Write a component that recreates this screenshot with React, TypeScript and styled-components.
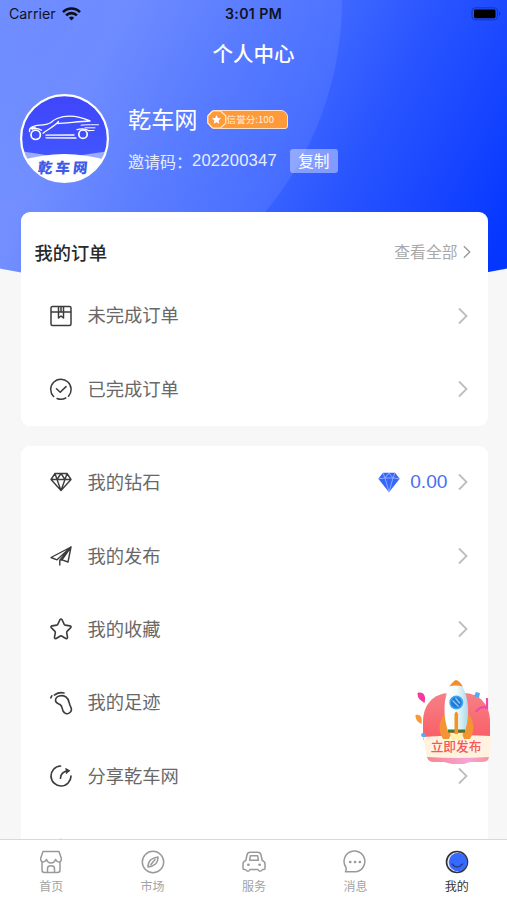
import React from "react";
import styled, { createGlobalStyle, css } from "styled-components";

const GlobalStyle = createGlobalStyle`
  * { box-sizing: border-box; }
  body { margin: 0; background: #f7f7f7; overflow: hidden; }
`;

const cjk = `"Noto Sans CJK SC", sans-serif`;

const Screen = styled.div`
  position: relative;
  display: flex;
  flex-direction: column;
  width: 507px;
  height: 900px;
  overflow: hidden;
  background: #f7f7f7;
  font-family: ${cjk};
`;

const Content = styled.main`
  flex: 1;
  min-height: 0;
  overflow: hidden;
`;

const Header = styled.header`
  height: 294px;
  background:
    radial-gradient(circle at 11px 0, rgba(255, 255, 255, 0.01) 60px, rgba(255, 255, 255, 0.08) 330.5px, transparent 331.5px),
    linear-gradient(118deg, #6f8dff 0%, #6b89ff 20%, #5075ff 38%, #3d66ff 53%, #2753ff 68%, #1745ff 82%, #0436ff 95%);
  clip-path: circle(1267px at 50% -973px);
`;

const StatusBar = styled.div`
  display: grid;
  grid-template-columns: 1fr auto 1fr;
  align-items: center;
  height: 28px;
  padding: 0 5px 0 9px;
  color: #10131f;
  font: 500 14.3px/28px Inter, sans-serif;
`;

const Carrier = styled.div`
  display: flex;
  align-items: center;
  gap: 6px;
  font-weight: 400;
  font-size: 14.2px;
`;

const Clock = styled.div`
  margin-left: -4px;
  font-weight: 600;
  font-size: 14.2px;
  letter-spacing: 0.35px;
`;

const BatteryBox = styled.div`
  display: flex;
  justify-content: flex-end;
`;

const Title = styled.h1`
  margin: 0;
  height: 50px;
  color: #fff;
  text-align: center;
  font-weight: 500;
  font-size: 20.5px;
  line-height: 50px;
`;

const Profile = styled.section`
  display: flex;
  align-items: center;
  gap: 19px;
  height: 90px;
  margin-top: 15px;
  padding-left: 20px;
  color: #fff;
`;

const Avatar = styled.div`
  width: 89px;
  height: 89px;
  flex: none;
  svg { display: block; }
`;

const Identity = styled.div`
  display: flex;
  flex-direction: column;
  gap: 14px;
`;

const NameLine = styled.div`
  display: flex;
  align-items: center;
  gap: 9px;
  height: 32px;
  font-size: 23.2px;
  line-height: 30px;
`;

const Name = styled.span`
  height: 32px;
`;

const Credit = styled.div`
  display: flex;
  align-items: center;
  width: 81px;
  height: 19px;
  border: 1px solid #ffe2c4;
  border-radius: 9px 7px 3px 9px;
  background: #ff9a3a;
  font-size: 9.6px;
  line-height: 17px;
  white-space: nowrap;
  color: #fff0dc;
  svg { flex: none; margin-left: -1px; }
`;

const InviteLine = styled.div`
  display: flex;
  align-items: center;
  height: 24px;
  font-size: 16px;
  color: #e6ecff;
`;

const Code = styled.span`
  font-family: "Liberation Sans", sans-serif;
  font-size: 16.6px;
  letter-spacing: 0.2px;
`;

const CopyButton = styled.button`
  width: 48px;
  height: 24px;
  margin-left: 13px;
  padding: 0;
  border: 0;
  border-radius: 3px;
  background: rgba(255, 255, 255, 0.4);
  color: #fff;
  font: 15.7px/22px ${cjk};
`;

const Cards = styled.div`
  position: relative;
  display: flex;
  flex-direction: column;
  gap: 20px;
  margin: -82px 19.5px 0 20.5px;
`;

const Card = styled.section`
  border-radius: 9px;
  background: #fff;
`;

const CardHead = styled.div`
  display: flex;
  align-items: center;
  justify-content: space-between;
  height: 67px;
  padding: 12px 17px 0 14px;
`;

const CardTitle = styled.h2`
  margin: 0;
  color: #292929;
  font-weight: 500;
  font-size: 18.2px;
`;

const MoreLink = styled.a`
  display: flex;
  align-items: center;
  gap: 5px;
  color: #a9a9a9;
  font-size: 15.8px;
`;

const Row = styled.div`
  display: flex;
  align-items: center;
  height: 73.4px;
  padding: 0 20px 0 28px;
  svg { flex: none; }
`;

const RowLabel = styled.span`
  flex: 1;
  margin-left: 15px;
  padding-bottom: 2.6px;
  color: #686868;
  font-size: 18.3px;
`;

const Balance = styled.span`
  display: flex;
  align-items: center;
  gap: 10px;
  margin-right: 10px;
  color: #4a70f0;
  font: 19.2px "Liberation Sans", sans-serif;
`;

const TabBar = styled.nav`
  display: grid;
  grid-template-columns: repeat(5, 1fr);
  height: 61px;
  border-top: 1px solid #d8d8d8;
  background: #fff;
`;

const Tab = styled.div<{ $active?: boolean }>`
  display: flex;
  flex-direction: column;
  align-items: center;
  padding-top: 10px;
  padding-left: 1px;
  gap: 3px;
  color: #a3a3a3;
  font-size: 12px;
  line-height: 18px;
  ${(p) => p.$active && css`color: #333;`}
  svg { display: block; }
`;

const Publish = styled.div`
  position: absolute;
  left: 414px;
  top: 678px;
  width: 80px;
  height: 90px;
`;

const PublishText = styled.span`
  position: absolute;
  left: 0;
  top: 59px;
  width: 84px;
  color: #f4565b;
  text-align: center;
  font-weight: 500;
  font-size: 12.7px;
  line-height: 18px;
`;

const BrandText = styled.text`
  font: 900 14.5px ${cjk};
  letter-spacing: 3px;
  fill: #405be8;
`;

const Line: React.FC<{ children: React.ReactNode; size?: number; width?: number; color?: string }> = ({
  children, size = 24, width = 1.5, color = "#3c3c3c",
}) => (
  <svg width={size} height={size} viewBox="0 0 24 24" fill="none" stroke={color} strokeWidth={width} strokeLinecap="round" strokeLinejoin="round">
    {children}
  </svg>
);

const Chevron = ({ small = false }: { small?: boolean }) => (
  <svg width={small ? 8 : 10} height={small ? 14 : 18} viewBox="0 0 10 18" fill="none" stroke={small ? "#999" : "#bdbdbd"} strokeWidth="1.8">
    <path d="M1 1.5 8.5 9 1 16.5" />
  </svg>
);

const Wifi = () => (
  <svg width="19" height="14" viewBox="0 0 19 14" fill="none" stroke="#0b0e19" strokeWidth="2.6">
    <path d="M1 5.1a12 12 0 0 1 17 0M4.1 8.4a7.6 7.6 0 0 1 10.8 0" />
    <path d="m6.8 10.8 2.7 2.8 2.7-2.8a4 4 0 0 0-5.4 0Z" fill="#0b0e19" stroke="none" />
  </svg>
);

const Battery = () => (
  <svg width="31" height="14" viewBox="0 0 31 14">
    <rect x="1" y=".8" width="25.5" height="12" rx="3.2" fill="none" stroke="#1a35aa" />
    <rect x="3" y="2.6" width="21.5" height="8.6" rx="1.4" fill="#000" />
    <path d="M28 4.8v4c1.8-.7 1.8-3.3 0-4Z" fill="#1a35aa" />
  </svg>
);

const BrandLogo = () => (
  <svg width="89" height="89" viewBox="0 0 89 89">
    <defs>
      <clipPath id="disc"><circle cx="44.5" cy="44.5" r="43" /></clipPath>
      <linearGradient id="night" x1="0" y1="0" x2="0" y2="1">
        <stop offset="0" stopColor="#3f45fb" /><stop offset="1" stopColor="#425dff" />
      </linearGradient>
    </defs>
    <circle cx="44.5" cy="44.5" r="43.5" fill="url(#night)" />
    <g clipPath="url(#disc)">
      <path d="M0 57q22 3 44 7 22-4 45-7v32H0Z" fill="#9babff" />
      <path d="M0 67q44-14 89 0v22H0Z" fill="#fff" />
    </g>
    <circle cx="44.5" cy="44.5" r="43.4" fill="none" stroke="#fff" strokeWidth="2.2" />
    <g fill="none" stroke="#fff" strokeWidth="1.3" strokeLinecap="round">
      <circle cx="15.7" cy="40.8" r="4.7" strokeWidth="1.7" />
      <circle cx="63" cy="40.2" r="4.2" strokeWidth="1.7" />
      <path d="M9.500 37.500C9 33.500 12.500 32 20 31.200q7-.4 11-2.700 2-2.200 6-4c11-4.500 22-2.500 33 2.300M37 29.500C46 29.500 58 27.300 70 27M10 34.500l5-.8M23 39.200C28 35 34 33 38.500 27.500M21.500 36.200q-5-3-9.500-1M26 41.200l28-.2M26 43.800l30 .2M57 35.600c5-1.500 9-.8 12 1.200" />
      <path d="M61 31.200c6-.7 13-.4 17.500-.4M65 33.800h10M69 36.500h5" strokeWidth="1" />
    </g>
    <BrandText transform="translate(17.500 78.500) skewX(-6)">乾车网</BrandText>
  </svg>
);

const Medal = () => (
  <svg width="20" height="19" viewBox="0 0 20 19">
    <path d="M5.8.8h7.4l5.5 5v7.4l-5.5 5H5.8L.8 13V6Z" fill="#ff9a3a" stroke="#ffe5cc" strokeWidth="1.3" />
    <path d="m9.500 5 1.400 2.900 3.100.4-2.300 2.200.6 3.200-2.800-1.500-2.800 1.500.6-3.200L5 8.300l3.100-.4Z" fill="#fff" />
  </svg>
);

const BlueGem = () => (
  <svg width="22" height="21" viewBox="0 0 22 21">
    <path d="M5 .8h12l4.700 6L11 20.200.3 6.800Z" fill="#3766ff" />
    <path d="M.5 6.800 7 6l4-5 4 5 6.500.8M7 6l4 13.800L15 6M7 6h8M5 1l2 5M17 1l-2 5" fill="none" stroke="#a2bbff" strokeWidth=".8" />
  </svg>
);

const Rocket = () => (
  <svg width="80" height="90" viewBox="0 0 80 90">
    <defs>
      <linearGradient id="rose" x1="0" y1="0" x2="0" y2="1"><stop stopColor="#f68187" /><stop offset="1" stopColor="#fa5d65" /></linearGradient>
      <linearGradient id="base"><stop stopColor="#f9848e" /><stop offset=".65" stopColor="#f6a4d7" /><stop offset="1" stopColor="#f794a2" /></linearGradient>
      <linearGradient id="hull"><stop stopColor="#fff" /><stop offset=".5" stopColor="#f2fbfe" /><stop offset="1" stopColor="#acd9eb" /></linearGradient>
    </defs>
    <path d="M9 62V44c0-17 10-29 27-29h13c17 0 27 12 27 29v18Z" fill="url(#rose)" />
    <path d="M13 79h62l-1 3q-2 2-7 2H56l-6 2H38l-8-2H20q-6 0-7-5Z" fill="url(#base)" />
    <path d="M9 59q34-3 68-1l-2 21q-31 2-62 0Z" fill="#fff3df" />
    <path d="M3.500 15c6-2 9 3 7 10-4-3-7-4-7-10Z" fill="#f43b9c" />
    <path d="M1.500 37c5-1 7 2 6 9-4-2-6-4-6-9Z" fill="#f99a38" />
    <path d="M7 57c1-3 4-3 5 0-1 3-4 3-5 0ZM62 14l4 1-1 5-5-2Z" fill="#53abf3" />
    <path d="M73 20v10c-4-2-9 0-11 4" fill="none" stroke="#ee4ba4" strokeWidth="2.200" />
    <path d="M33 34c-8 7-10 17-4 27h6l2-5ZM52 34c8 7 10 17 4 27h-6l-2-5Z" fill="#f59432" />
    <path d="M36 55h13l-2 9-4.500-3-4.500 3Z" fill="#fff0ac" />
    <path d="M36 7.500C29 20 29 38 34 53h17c5-15 4-33-3-45.500Z" fill="url(#hull)" />
    <path d="M35.500 8.500Q39 3 42 2q4 1 6.700 6.500-7-2-13.200 0Z" fill="#f58b29" />
    <path d="M34 51.500h17v3H34Z" fill="#397e38" />
    <path d="M40.500 36q1.800-5 3.600 0v20h-3.600Z" fill="#f39425" />
    <circle cx="42.300" cy="24.500" r="7" fill="#3aa9f3" />
    <circle cx="42.300" cy="24.500" r="5.400" fill="#2577d4" />
    <path d="m38.500 22.500 6 6m-3-8.500 4.500 5.500" stroke="#8acbf6" strokeWidth="1.300" />
  </svg>
);

const BoxIcon = () => <Line><path d="M2 4q0-1.500 1.500-1.500h17Q22 2.500 22 4v16q0 1.500-1.500 1.500h-17Q2 21.500 2 20ZM2 8h20M9.500 2.500V14l2.500-2 2.500 2V2.500M12 2.500V8" /></Line>;
const DoneIcon = () => <Line><path d="M4.600 19.500A10.200 10.200 0 1 1 19.500 19.200M16.800 21A10.200 10.200 0 0 1 8 21.500M7.500 11.800l3.700 3.400 5.800-5.600" /></Line>;
const GemIcon = () => <Line width={1.400}><path d="M6 3.500h12l4 6-10 11-10-11ZM2 9.500h20M6 3.500l2 6 4-6 4 6 2-6M8 9.500l4 11 4-11" /></Line>;
const SendIcon = () => <Line width={1.400}><path d="M22 3 2 13.500l6 2.300L22 3l-3 15-6-2.200M22 3 10.800 16.200V21M10.800 16.200 13 15.800 22 3" /></Line>;
const StarIcon = () => <Line width={1.600}><path d="M10.800 3q1.200-2 2.400 0l2 4.400q.3.600 1 .7l4.700.8q2 .5.600 2L18 14.400q-.4.500-.3 1.200l.8 4.500q.2 2-1.700 1.400L12.600 19q-.6-.3-1.200 0L7.200 21.500q-1.900.6-1.700-1.400l.8-4.500q.1-.7-.3-1.200l-3.500-3.500q-1.400-1.500.6-2l4.700-.8q.7-.1 1-.7Z" /></Line>;
const FootIcon = () => <Line width={1.600}><path d="M6.500 9.500C6.500 4.500 13 3.500 17 6c3.600 2.400 2.500 6 4.600 9.700 3 6-4.600 9.800-7.600 4.300-.9-2.200-.5-5-3-6.500C8.500 12.500 6.500 12 6.500 9.500ZM1.800 6.800l1-2M5.500 4Q10 .8 15 2" /></Line>;
const ShareIcon = () => <Line width={1.700}><path d="M11.500 2A10 10 0 1 0 22 12M11.500 14.200c0-4.200 2.800-7.200 8-7.200" /><path d="m16.300 3.800 5 2.800-4.300 3.600Z" fill="#3c3c3c" stroke="none" /></Line>;
const GearIcon = () => <Line width={1.600}><path d="m12 2.500 8 4.500v10l-8 5-8-5V7Z" /><circle cx="12" cy="12" r="3" /></Line>;

const gray = "#999";
const HomeIcon = () => <Line color={gray}><path d="M4 1.500h16l2.300 6.700v2q-1.600 3-4 1.300-1.500-1.500-1.800-2-1.200 3.500-4.500 3.500T7.500 9.500q-.3.500-1.800 2-2.400 1.700-4-1.300v-2ZM3 12.500V20q0 2.500 2.500 2.500h13Q21 22.500 21 20v-7.500M8.500 22v-3.500q0-2.700 3.500-2.700t3.500 2.700V22" /></Line>;
const CompassIcon = () => <Line color={gray}><circle cx="12" cy="12" r="10.700" /><path d="M17 7q-5 .7-7.500 3Q7 12.500 7 17q5-.7 7.500-3Q17 11.500 17 7ZM14 9.500l-4 5" /></Line>;
const CarIcon = () => <Line color={gray}><path d="M3.800 10.500 5 5q.6-2.700 3.200-2.700h7.600Q18.400 2.300 19 5l1.200 5.500q2.800 1 2.800 3.500v4.500q0 1-1 1h-1.500q-.8 1.700-2.500 1.700-1.200 0-2-1.700H8q-.8 1.700-2 1.700-1.700 0-2.500-1.700H2q-1 0-1-1V14q0-2.500 2.800-3.500ZM7.600 10.200l.8-4.500h7.200l.8 4.500Z" /><path d="M6.300 14.800h.2M17.500 14.800h.2" strokeWidth="2.600" /></Line>;
const ChatIcon = () => <Line color={gray}><path d="M2.500 21.800h9.700A10.400 10.400 0 1 0 3 17.500q.5 2-.5 4.300Z" /><path d="M7.200 12h.1M12 12h.1M16.800 12h.1" strokeWidth="2.600" /></Line>;
const MeIcon = () => (
  <svg width="24" height="24" viewBox="0 0 24 24">
    <circle cx="12" cy="12" r="10.500" fill="#e6eaff" stroke="#333" strokeWidth="1.600" />
    <circle cx="13" cy="12" r="9.200" fill="#3769ff" />
    <path d="M7 14q5 6 10.500 0" fill="none" stroke="#263d88" strokeWidth="1.500" strokeLinecap="round" />
  </svg>
);

const orders = [
  { label: "未完成订单", icon: <BoxIcon /> },
  { label: "已完成订单", icon: <DoneIcon /> },
];

const menu = [
  { label: "我的钻石", icon: <GemIcon />, balance: "0.00" },
  { label: "我的发布", icon: <SendIcon /> },
  { label: "我的收藏", icon: <StarIcon /> },
  { label: "我的足迹", icon: <FootIcon /> },
  { label: "分享乾车网", icon: <ShareIcon /> },
  { label: "", icon: <GearIcon /> },
];

const tabs = [
  { label: "首页", icon: <HomeIcon /> },
  { label: "市场", icon: <CompassIcon /> },
  { label: "服务", icon: <CarIcon /> },
  { label: "消息", icon: <ChatIcon /> },
  { label: "我的", icon: <MeIcon />, active: true },
];

const MenuRow = ({ label, icon, balance }: { label: string; icon: React.ReactNode; balance?: string }) => (
  <Row>
    {icon}
    <RowLabel>{label}</RowLabel>
    {balance && <Balance><BlueGem />{balance}</Balance>}
    <Chevron />
  </Row>
);

export default function App() {
  return (
    <Screen>
      <GlobalStyle />
      <Content>
        <Header>
          <StatusBar>
            <Carrier>Carrier<Wifi /></Carrier>
            <Clock>3:01 PM</Clock>
            <BatteryBox><Battery /></BatteryBox>
          </StatusBar>
          <Title>个人中心</Title>
          <Profile>
            <Avatar><BrandLogo /></Avatar>
            <Identity>
              <NameLine><Name>乾车网</Name><Credit><Medal />信誉分:100</Credit></NameLine>
              <InviteLine>邀请码：<Code>202200347</Code><CopyButton>复制</CopyButton></InviteLine>
            </Identity>
          </Profile>
        </Header>
        <Cards>
          <Card>
            <CardHead>
              <CardTitle>我的订单</CardTitle>
              <MoreLink>查看全部<Chevron small /></MoreLink>
            </CardHead>
            {orders.map((o) => <MenuRow key={o.label} {...o} />)}
          </Card>
          <Card>
            {menu.map((m) => <MenuRow key={m.label} {...m} />)}
          </Card>
        </Cards>
      </Content>
      <Publish>
        <Rocket />
        <PublishText>立即发布</PublishText>
      </Publish>
      <TabBar>
        {tabs.map((t) => <Tab key={t.label} $active={t.active}>{t.icon}{t.label}</Tab>)}
      </TabBar>
    </Screen>
  );
}
